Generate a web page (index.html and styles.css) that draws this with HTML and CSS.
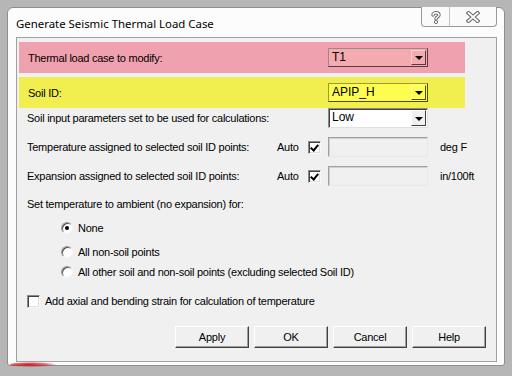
FILE: index.html
```html
<!DOCTYPE html>
<html>
<head>
<meta charset="utf-8">
<link rel="stylesheet" href="styles.css">
</head>
<body>
<div class="window">
  <div class="titlebar">
    <div class="title">Generate Seismic Thermal Load Case</div>
    <div class="caption-buttons">
      <div class="cap cap-help">
        <svg width="12" height="14" viewBox="0 0 12 14">
          <path d="M3 5 C3 2 9 2 9 5 C9 7 6 7 6 9" fill="none" stroke="#6d6d6d" stroke-width="3.4" stroke-linecap="round"/>
          <path d="M3 5 C3 2 9 2 9 5 C9 7 6 7 6 9" fill="none" stroke="#fff" stroke-width="1.4" stroke-linecap="round"/>
          <circle cx="6" cy="12" r="1.6" fill="#fff" stroke="#6d6d6d" stroke-width="1"/>
        </svg>
      </div>
      <div class="cap cap-close">
        <svg width="14" height="12" viewBox="0 0 14 12">
          <path d="M2.5 2 L11.5 10 M11.5 2 L2.5 10" stroke="#6d6d6d" stroke-width="4" stroke-linecap="square"/>
          <path d="M2.5 2 L11.5 10 M11.5 2 L2.5 10" stroke="#fff" stroke-width="1.8" stroke-linecap="square"/>
        </svg>
      </div>
    </div>
  </div>
  <div class="client">
    <div class="band band-pink">
      <span class="label">Thermal load case to modify:</span>
      <div class="combo combo-pink"><span class="combo-text">T1</span><span class="drop"><i class="arrow"></i></span></div>
    </div>
    <div class="band band-yellow">
      <span class="label">Soil ID:</span>
      <div class="combo combo-yellow"><span class="combo-text">APIP_H</span><span class="drop"><i class="arrow"></i></span></div>
    </div>
    <div class="row row-low">
      <span class="label">Soil input parameters set to be used for calculations:</span>
      <div class="combo combo-white"><span class="combo-text">Low</span><span class="drop"><i class="arrow"></i></span></div>
    </div>
    <div class="row row-field row-temp">
      <span class="label">Temperature assigned to selected soil ID points:</span>
      <span class="auto">Auto</span>
      <span class="check checked"></span>
      <span class="field"></span>
      <span class="unit">deg F</span>
    </div>
    <div class="row row-field row-exp">
      <span class="label">Expansion assigned to selected soil ID points:</span>
      <span class="auto">Auto</span>
      <span class="check checked"></span>
      <span class="field"></span>
      <span class="unit">in/100ft</span>
    </div>
    <div class="row row-text">Set temperature to ambient (no expansion) for:</div>
    <div class="radio-row r1"><span class="radio on"></span><span>None</span></div>
    <div class="radio-row r2"><span class="radio"></span><span>All non-soil points</span></div>
    <div class="radio-row r3"><span class="radio"></span><span>All other soil and non-soil points (excluding selected Soil ID)</span></div>
    <div class="check-row"><span class="check"></span><span>Add axial and bending strain for calculation of temperature</span></div>
    <div class="buttons">
      <button class="btn">Apply</button>
      <button class="btn">OK</button>
      <button class="btn">Cancel</button>
      <button class="btn">Help</button>
    </div>
  </div>
  <div class="glare"></div>
</div>
</body>
</html>
```

FILE: styles.css
```css
html, body {
  margin: 0;
  padding: 0;
}
body {
  width: 512px;
  height: 376px;
  overflow: hidden;
  background: #b6b6b6;
  font-family: "Liberation Sans", Arial, sans-serif;
  font-size: 11px;
  letter-spacing: -0.25px;
  color: #000;
}
.window {
  position: relative;
  box-sizing: border-box;
  margin: 7px 0 0 7px;
  width: 498px;
  height: 359px;
  border: 1px solid #8e8e8e;
  border-radius: 6px 6px 3px 3px;
  background: #fcfcfc;
  padding: 0 7px 3px 8px;
  display: flex;
  flex-direction: column;
}
.titlebar {
  height: 29px;
  flex: none;
  display: flex;
  justify-content: space-between;
  align-items: flex-start;
}
.title {
  font-family: "Noto Sans", "Open Sans", sans-serif;
  font-size: 11.4px;
  letter-spacing: 0;
  line-height: 16px;
  padding-top: 8px;
  color: #000;
}
.caption-buttons {
  margin-top: -1px;
  box-sizing: border-box;
  width: 76px;
  height: 20px;
  border: 1px solid #999;
  border-top: none;
  border-radius: 0 0 4px 4px;
  display: flex;
  background: #fafafa;
}
.cap {
  display: flex;
  align-items: center;
  justify-content: center;
}
.cap-help {
  width: 27px;
  border-right: 1px solid #c4c4c4;
}
.cap-close {
  flex: 1;
}
.client {
  flex: 1;
  box-sizing: border-box;
  border: 1px solid #a0a0a0;
  background: #f0f0f0;
  display: flex;
  flex-direction: column;
}
.band {
  box-sizing: border-box;
  margin-left: 2px;
  width: 446px;
  height: 31px;
  padding-left: 9px;
  display: grid;
  grid-template-columns: 300px 100px;
  align-items: center;
}
.band-pink {
  margin-top: 4px;
  background: #f0a1b0;
}
.band-yellow {
  margin-top: 4px;
  background: #f1ef4f;
}
.label {
  white-space: nowrap;
}
.combo {
  box-sizing: border-box;
  height: 19px;
  display: flex;
  border-style: solid;
  border-width: 1px;
  border-color: #8a8a8a #3c3c3c #3c3c3c #8a8a8a;
  padding: 1px;
}
.combo-pink {
  background: #f4abb0;
  border-color: #9a8a8c #5a3a3c #5a3a3c #9a8a8c;
}
.combo-yellow {
  background: #fdfd50;
  border-color: #9a9a40 #4a4a10 #4a4a10 #9a9a40;
}
.combo-white {
  background: #fff;
  border-color: #8a8a8a #e0e0e0 #e0e0e0 #8a8a8a;
  box-shadow: inset 1px 1px 0 #404040;
}
.combo-text {
  flex: 1;
  padding-left: 2px;
  font-size: 12px;
  line-height: 15px;
  letter-spacing: 0;
}
.drop {
  width: 15px;
  box-sizing: border-box;
  border-style: solid;
  border-width: 1px;
  border-color: #fff #404040 #404040 #fff;
  display: flex;
  align-items: center;
  justify-content: center;
}
.combo-white .drop {
  background: #f0f0f0;
}
.combo-yellow .drop {
  border-color: #ffffa0 #4a4a10 #4a4a10 #ffffa0;
}
.combo-pink .drop {
  border-color: #fcd0d4 #5a3a3c #5a3a3c #fcd0d4;
}
.arrow {
  width: 0;
  height: 0;
  border-left: 4px solid transparent;
  border-right: 4px solid transparent;
  border-top: 4px solid #000;
  margin-top: 1px;
}
.row {
  box-sizing: border-box;
  padding-left: 10px;
  display: grid;
  align-items: center;
}
.row-low {
  height: 20px;
  grid-template-columns: 301px 100px;
}
.row-low .combo {
  height: 20px;
}
.row-field {
  height: 20px;
  grid-template-columns: 250px 31px 20px 100px auto;
}
.row-temp {
  margin-top: 9px;
}
.row-exp {
  margin-top: 9px;
}
.field {
  box-sizing: border-box;
  height: 20px;
  border-style: solid;
  border-width: 1px;
  border-color: #a0a0a0 #e8e8e8 #e8e8e8 #a0a0a0;
  background: #f0f0f0;
  box-shadow: inset 1px 1px 0 #d0d0d0;
}
.unit {
  padding-left: 12px;
}
.check {
  position: relative;
  box-sizing: border-box;
  width: 13px;
  height: 13px;
  border-style: solid;
  border-width: 1px;
  border-color: #8a8a8a #f8f8f8 #f8f8f8 #8a8a8a;
  background: #fff;
  box-shadow: inset 1px 1px 0 #404040, inset -1px -1px 0 #e0e0e0;
}
.check.checked::after {
  content: "";
  position: absolute;
  left: 3px;
  top: 1px;
  width: 3px;
  height: 6px;
  border-right: 2px solid #000;
  border-bottom: 2px solid #000;
  transform: rotate(40deg);
}
.row-text {
  margin-top: 10px;
  height: 16px;
  display: flex;
  align-items: center;
}
.radio-row {
  box-sizing: border-box;
  height: 16px;
  padding-left: 44px;
  display: flex;
  align-items: center;
  gap: 5px;
}
.r1 { margin-top: 8px; }
.r2 { margin-top: 8px; }
.r3 { margin-top: 4px; }
.radio {
  position: relative;
  box-sizing: border-box;
  width: 12px;
  height: 12px;
  border-radius: 50%;
  background: #fff;
  border: 1px solid;
  border-color: #9a9a9a #f4f4f4 #f4f4f4 #9a9a9a;
  box-shadow: inset 1px 1px 0 #505050;
}
.radio.on::after {
  content: "";
  position: absolute;
  left: 3px;
  top: 3px;
  width: 4px;
  height: 4px;
  border-radius: 50%;
  background: #000;
}
.check-row {
  box-sizing: border-box;
  margin-top: 13px;
  height: 16px;
  padding-left: 10px;
  display: flex;
  align-items: center;
  gap: 5px;
}
.buttons {
  margin-top: 17px;
  display: flex;
  justify-content: flex-end;
  gap: 5px;
  padding-right: 10px;
}
.btn {
  box-sizing: border-box;
  width: 74px;
  height: 22px;
  padding: 0;
  font-family: "Liberation Sans", Arial, sans-serif;
  font-size: 11px;
  letter-spacing: -0.25px;
  color: #000;
  background: #f0f0f0;
  border-style: solid;
  border-width: 1px;
  border-color: #fff #404040 #404040 #fff;
  box-shadow: inset -1px -1px 0 #a0a0a0;
}
.glare {
  position: absolute;
  left: 2px;
  bottom: -2px;
  width: 46px;
  height: 5px;
  border-radius: 50%;
  background: radial-gradient(ellipse at 40% 50%, rgba(200, 20, 30, 0.95) 0%, rgba(200, 20, 30, 0.6) 45%, rgba(200, 20, 30, 0) 75%);
}
```
